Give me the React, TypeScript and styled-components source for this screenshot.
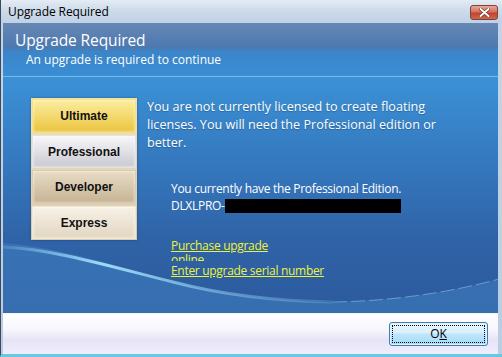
import React from "react";
import styled, { createGlobalStyle } from "styled-components";

const Global = createGlobalStyle`
  html, body {
    margin: 0;
    padding: 0;
    background: #ffffff;
  }
`;

const Window = styled.div`
  width: 502px;
  height: 357px;
  box-sizing: border-box;
  display: flex;
  flex-direction: column;
  background: linear-gradient(180deg, #dfe8f2 0%, #c4d4e6 22px, #b9cde3 100%);
  border-left: 1px solid #3a4a5c;
  border-bottom: 3px solid #6cc6e6;
  font-family: "Open Sans", "Noto Sans", sans-serif;
  overflow: hidden;
`;

const TitleBar = styled.div`
  height: 23px;
  flex: none;
  display: flex;
  align-items: center;
  justify-content: space-between;
  padding: 0 4px 0 7px;
  background: linear-gradient(180deg, #e4ecf5 0%, #cddbea 45%, #bfd1e5 100%);
`;

const TitleText = styled.span`
  font-size: 12px;
  color: #000;
  letter-spacing: -0.1px;
`;

const CloseButton = styled.div`
  width: 28px;
  height: 15px;
  margin-top: 2px;
  border-radius: 3px;
  border: 1px solid #7a4238;
  box-sizing: border-box;
  background: linear-gradient(180deg, #e9a898 0%, #d6705c 45%, #c2452e 55%, #d0664c 100%);
  display: flex;
  align-items: center;
  justify-content: center;
`;

const Client = styled.div`
  flex: 1;
  display: flex;
  flex-direction: column;
  margin: 0 4px 0 2px;
`;

const Header = styled.div`
  height: 54px;
  flex: none;
  padding: 7px 0 0 12px;
  box-sizing: border-box;
  background: linear-gradient(180deg, #6787b4 0%, #4d79b0 45%, #3b85c9 55%, #3a8ed4 100%);
  border-bottom: 1px solid #7cb8e4;
  color: #fff;
`;

const HeaderTitle = styled.div`
  font-size: 15.5px;
  line-height: 20px;
  letter-spacing: -0.1px;
`;

const HeaderSub = styled.div`
  font-size: 12px;
  line-height: 17px;
  padding-left: 11px;
  margin-top: 1px;
`;

const Body = styled.div`
  position: relative;
  flex: 1;
  display: flex;
  gap: 10px;
  padding: 21px 0 0 28px;
  background: linear-gradient(180deg, #3b91d6 0%, #3579bf 35%, #2f62a6 70%, #2c5b9d 100%);
  overflow: hidden;
`;

const Swoosh = styled.svg`
  position: absolute;
  left: 0;
  bottom: 0;
  pointer-events: none;
`;

const Editions = styled.div`
  position: relative;
  width: 104px;
  flex: none;
  align-self: flex-start;
  display: flex;
  flex-direction: column;
  gap: 2px;
  padding: 1px;
  background: linear-gradient(180deg, #efe4b4, #d8cbb2);
  box-shadow: 0 0 2px rgba(20, 40, 80, 0.5);
`;

const Edition = styled.div<{ $top: string; $bottom: string; $edge: string; $h: number }>`
  box-sizing: border-box;
  height: ${(p) => p.$h}px;
  display: flex;
  align-items: center;
  justify-content: center;
  background: linear-gradient(180deg, ${(p) => p.$top} 0%, ${(p) => p.$bottom} 100%);
  border: 1px solid ${(p) => p.$edge};
  box-shadow: inset 0 0 3px rgba(255, 255, 255, 0.8);
  font-family: "Liberation Sans", Arial, sans-serif;
  font-weight: bold;
  font-size: 12px;
  color: #111;
`;

const Content = styled.div`
  position: relative;
  display: flex;
  flex-direction: column;
  color: #fff;
  font-size: 12.6px;
`;

const Message = styled.p`
  margin: 0;
  width: 300px;
  line-height: 18px;
  text-shadow: 0 1px 1px rgba(0, 0, 0, 0.25);
`;

const Details = styled.div`
  margin: 28px 0 0 24px;
  font-size: 12px;
  line-height: 17px;
  letter-spacing: -0.3px;
`;

const Serial = styled.div`
  display: flex;
  align-items: center;
`;

const Redacted = styled.span`
  display: inline-block;
  width: 176px;
  height: 14px;
  background: #000;
`;

const Links = styled.div`
  margin: 25px 0 0 24px;
  display: flex;
  flex-direction: column;
  gap: 3px;
`;

const LinkBox = styled.div<{ $h: number; $w: number }>`
  width: ${(p) => p.$w}px;
  height: ${(p) => p.$h}px;
  overflow: hidden;
  font-size: 12px;
  line-height: 14px;
`;

const Link = styled.a`
  color: #ecf33a;
  text-decoration: underline;
  letter-spacing: -0.3px;
  cursor: pointer;
`;

const Footer = styled.div`
  height: 40px;
  flex: none;
  display: flex;
  align-items: center;
  justify-content: flex-end;
  padding-right: 10px;
  background: linear-gradient(180deg, #ffffff 0%, #f7f6fd 40%, #e6e3f8 65%, #efeefb 100%);
  border-top: 1px solid #f4f4fa;
`;

const OkButton = styled.button`
  width: 99px;
  height: 24px;
  padding: 2px;
  border-radius: 3px;
  border: 1px solid #3c7fb1;
  background: linear-gradient(180deg, #eaf6fd 0%, #d9f0fc 45%, #bee6fd 50%, #a7d9f5 100%);
  box-shadow: inset 0 0 0 1px #dff2fc;
  font-family: "Open Sans", "Noto Sans", sans-serif;
  font-size: 12px;
  color: #000;
`;

const FocusRing = styled.span`
  display: flex;
  align-items: center;
  justify-content: center;
  height: 100%;
  border: 1px dotted #000;
  box-sizing: border-box;
  line-height: 1;
  u {
    text-decoration: underline;
  }
`;

const editions = [
  { name: "Ultimate", top: "#fbeea0", bottom: "#ebc43e", edge: "#f6e07a", h: 34 },
  { name: "Professional", top: "#f7f7f9", bottom: "#c9c9d2", edge: "#e2e2e8", h: 33 },
  { name: "Developer", top: "#e8dcc6", bottom: "#c6b393", edge: "#dccdb2", h: 34 },
  { name: "Express", top: "#f7f1e6", bottom: "#e2d6c2", edge: "#efe6d4", h: 33 },
];

export default function App() {
  return (
    <>
      <Global />
      <Window>
        <TitleBar>
          <TitleText>Upgrade Required</TitleText>
          <CloseButton>
            <svg width="11" height="9" viewBox="0 0 11 9">
              <path d="M1.5 1 L9.5 8 M9.5 1 L1.5 8" stroke="#6b2a20" strokeWidth="3.2" strokeLinecap="round" />
              <path d="M1.5 1 L9.5 8 M9.5 1 L1.5 8" stroke="#fff" strokeWidth="2" strokeLinecap="round" />
            </svg>
          </CloseButton>
        </TitleBar>
        <Client>
          <Header>
            <HeaderTitle>Upgrade Required</HeaderTitle>
            <HeaderSub>An upgrade is required to continue</HeaderSub>
          </Header>
          <Body>
            <Swoosh width="496" height="110" viewBox="0 0 496 110">
              <defs>
                <linearGradient id="streak" x1="0" x2="1" y1="0" y2="0">
                  <stop offset="0" stopColor="#a8e6ff" stopOpacity="0.15" />
                  <stop offset="0.3" stopColor="#a8e6ff" stopOpacity="0.9" />
                  <stop offset="0.6" stopColor="#a8e6ff" stopOpacity="0.5" />
                  <stop offset="1" stopColor="#a8e6ff" stopOpacity="0.15" />
                </linearGradient>
              </defs>
              <path d="M0 40 C 60 44, 120 66, 170 79 C 220 92, 270 98, 330 99 C 400 98, 460 86, 496 76 L 496 110 L 0 110 Z" fill="rgba(70,140,205,0.4)" />
              <path d="M0 44 C 50 46, 110 64, 170 79 C 220 92, 270 98, 330 99" stroke="url(#streak)" strokeWidth="3" fill="none" />
              <path d="M330 99 C 400 98, 460 86, 496 76" stroke="rgba(160,210,240,0.5)" strokeWidth="1" strokeDasharray="14 4" fill="none" />
            </Swoosh>
            <Editions>
              {editions.map((e) => (
                <Edition key={e.name} $top={e.top} $bottom={e.bottom} $edge={e.edge} $h={e.h}>
                  {e.name}
                </Edition>
              ))}
            </Editions>
            <Content>
              <Message>
                You are not currently licensed to create floating licenses. You will need the
                Professional edition or better.
              </Message>
              <Details>
                <div>You currently have the Professional Edition.</div>
                <Serial>
                  DLXLPRO-<Redacted />
                </Serial>
              </Details>
              <Links>
                <LinkBox $w={100} $h={22}>
                  <Link>Purchase upgrade online</Link>
                </LinkBox>
                <LinkBox $w={200} $h={17}>
                  <Link>Enter upgrade serial number</Link>
                </LinkBox>
              </Links>
            </Content>
          </Body>
          <Footer>
            <OkButton>
              <FocusRing>
                O<u>K</u>
              </FocusRing>
            </OkButton>
          </Footer>
        </Client>
      </Window>
    </>
  );
}
